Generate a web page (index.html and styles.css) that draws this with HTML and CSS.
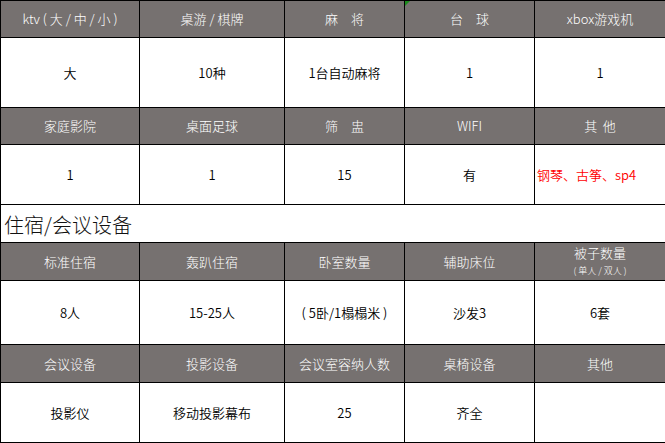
FILE: index.html
```html
<!DOCTYPE html>
<html lang="zh-CN">
<head>
<meta charset="utf-8">
<link rel="stylesheet" href="styles.css">
</head>
<body>
<table class="sheet">
  <colgroup>
    <col class="c1"><col class="c2"><col class="c3"><col class="c4"><col class="c5">
  </colgroup>
  <tr class="hd r37">
    <td>ktv ( 大 / 中 / 小 )</td>
    <td>桌游 / 棋牌</td>
    <td>麻&emsp;将</td>
    <td class="flag">台&emsp;球</td>
    <td>xbox游戏机</td>
  </tr>
  <tr class="dt r70">
    <td>大</td><td>10种</td><td>1台自动麻将</td><td>1</td><td>1</td>
  </tr>
  <tr class="hd r37">
    <td>家庭影院</td><td>桌面足球</td><td>筛&emsp;盅</td><td>WIFI</td><td>其&nbsp;&nbsp;他</td>
  </tr>
  <tr class="dt r60">
    <td>1</td><td>1</td><td>15</td><td>有</td><td class="red">钢琴、古筝、sp4</td>
  </tr>
  <tr class="title r38">
    <td colspan="5">住宿/会议设备</td>
  </tr>
  <tr class="hd r38">
    <td>标准住宿</td><td>轰趴住宿</td><td>卧室数量</td><td>辅助床位</td>
    <td><div class="two">被子数量</div><div class="sub">( 单人 / 双人 )</div></td>
  </tr>
  <tr class="dt r64">
    <td>8人</td><td>15-25人</td><td>( 5卧/1榻榻米 )</td><td>沙发3</td><td>6套</td>
  </tr>
  <tr class="hd r38">
    <td>会议设备</td><td>投影设备</td><td>会议室容纳人数</td><td>桌椅设备</td><td>其他</td>
  </tr>
  <tr class="dt r60">
    <td>投影仪</td><td>移动投影幕布</td><td>25</td><td>齐全</td><td></td>
  </tr>
</table>
</body>
</html>
```

FILE: styles.css
```css
html, body {
  margin: 0;
  padding: 0;
  background: #fff;
}
body {
  font-family: "Noto Sans CJK SC", "Liberation Sans", sans-serif;
  font-size: 13px;
  font-weight: 350;
  color: #000;
}
.sheet {
  border-collapse: collapse;
  table-layout: fixed;
  width: 665px;
}
.c1 { width: 139px; }
.c2 { width: 145px; }
.c3 { width: 120px; }
.c4 { width: 130px; }
.c5 { width: 131px; }
.sheet td {
  border: 1px solid #000;
  text-align: center;
  vertical-align: middle;
  padding: 0;
  line-height: 16px;
}
.hd td {
  background: #767170;
  color: #fff;
  font-weight: 300;
}
.r37 { height: 37px; }
.r38 { height: 38px; }
.r60 { height: 60px; }
.r64 { height: 64px; }
.r70 { height: 70px; }
.sheet td.red {
  color: #ff0000;
  text-align: left;
  padding-left: 2px;
}
.sheet .title td {
  text-align: left;
  font-size: 20px;
  font-weight: 300;
  color: #111;
  padding-left: 3px;
  padding-top: 2px;
  line-height: 24px;
}
.flag {
  position: relative;
}
.flag::before {
  content: "";
  position: absolute;
  left: 0;
  top: 0;
  border-top: 5px solid #1a8a1a;
  border-right: 5px solid transparent;
}
.two {
  line-height: 16px;
  margin-top: -2px;
}
.sub {
  font-size: 9px;
  line-height: 13px;
  margin-top: 3px;
}
```
